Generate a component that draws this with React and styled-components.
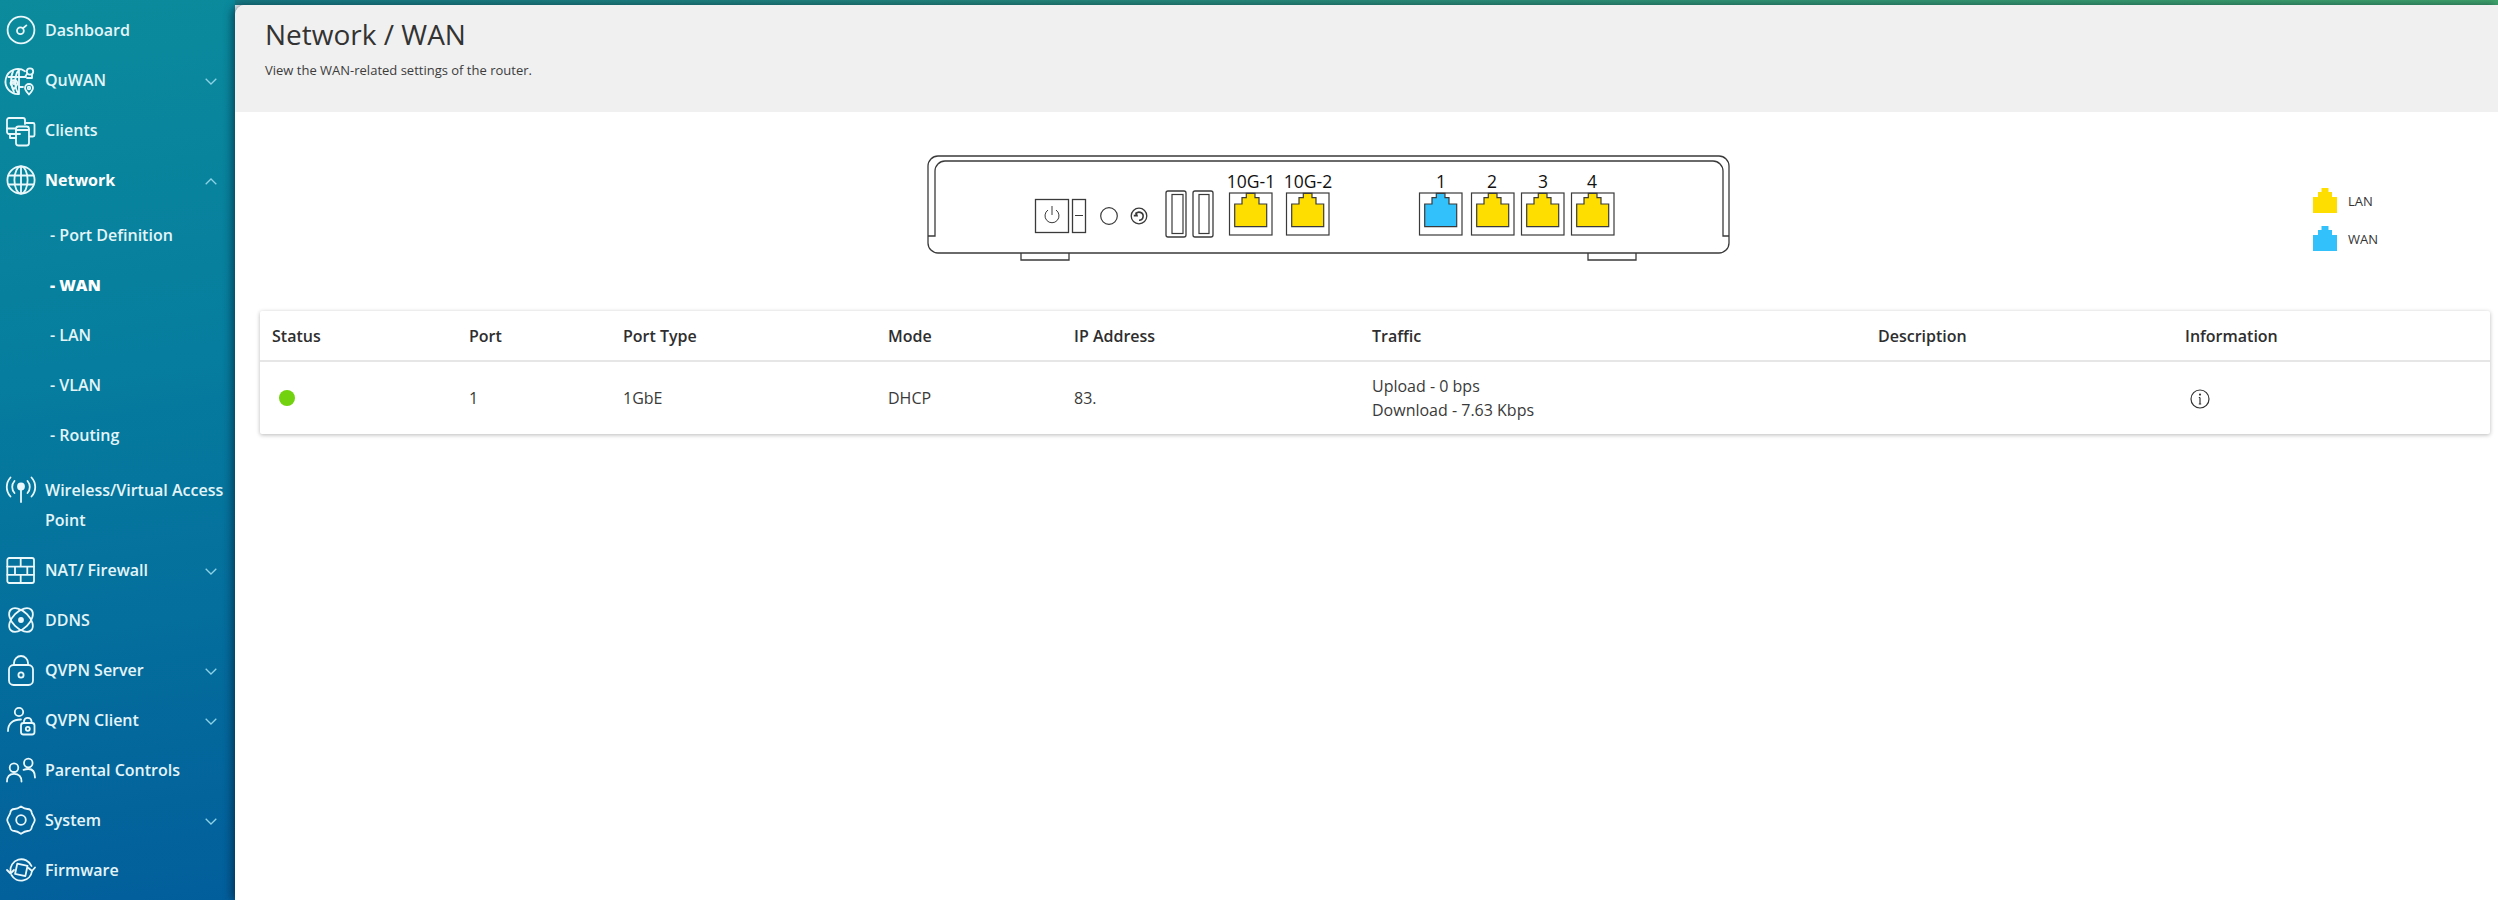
import React from "react";
import styled, { createGlobalStyle } from "styled-components";

const Global = createGlobalStyle`
  html, body { margin: 0; padding: 0; height: 100%; overflow: hidden; }
  body { font-family: "Open Sans", "Liberation Sans", sans-serif; background: #fff; }
  #root { height: 100%; }
`;

const Shell = styled.div`
  display: flex;
  width: 2498px;
  height: 900px;
  overflow: hidden;
`;

const Sidebar = styled.nav`
  width: 235px;
  flex: none;
  box-sizing: border-box;
  padding: 5px 0 0 6px;
  background: linear-gradient(172deg, #0b8b9c 0%, #067d9e 40%, #025e9b 100%);
  color: #e9f8fb;
`;

const NavItem = styled.div`
  display: flex;
  align-items: flex-start;
  padding: 10px 0;
  font-size: 16px;
  line-height: 30px;
  font-weight: ${(p) => (p.$active ? 700 : 600)};
  color: ${(p) => (p.$active ? "#fff" : "#e4f5f9")};
`;

const IconBox = styled.svg`
  flex: none;
  width: 30px;
  height: 30px;
  margin-right: 9px;
  overflow: visible;
  fill: none;
  stroke: #eaf8fb;
  stroke-width: 1.8;
  stroke-linecap: round;
  stroke-linejoin: round;
`;

const NavLabel = styled.span`
  flex: 1;
  min-width: 0;
`;

const Chevron = styled.svg`
  flex: none;
  width: 12px;
  height: 7px;
  margin: 13px 18px 0 0;
  fill: none;
  stroke: #8ed2e6;
  stroke-width: 1.3;
`;

const SubList = styled.div`
  padding: 5px 0;
`;

const SubItem = styled.div`
  padding: 10px 0 10px 44px;
  font-size: 16px;
  line-height: 30px;
  font-weight: ${(p) => (p.$active ? 800 : 600)};
  color: ${(p) => (p.$active ? "#fff" : "#e4f5f9")};
`;

const MainColumn = styled.div`
  flex: 1;
  display: flex;
  flex-direction: column;
  min-width: 0;
  position: relative;
`;

const TopStrip = styled.div`
  height: 5px;
  flex: none;
  background: linear-gradient(90deg, #177b85 0%, #2a8f7b 50%, #40a56c 100%);
`;

const Panel = styled.main`
  flex: 1;
  background: #fff;
  border-top-left-radius: 10px;
  box-shadow: -3px 0 9px rgba(0, 20, 40, 0.55);
  overflow: hidden;
`;

const PageHeader = styled.header`
  height: 107px;
  box-sizing: border-box;
  padding: 9px 0 0 30px;
  background: #f0f0f0;
`;

const Title = styled.h1`
  margin: 0;
  font-size: 28px;
  line-height: 40px;
  font-weight: 400;
  color: #333;
`;

const Subtitle = styled.p`
  margin: 7px 0 0;
  font-size: 13px;
  line-height: 18px;
  color: #3c3c3c;
`;

const DiagramRow = styled.section`
  display: flex;
  align-items: flex-start;
  height: 199px;
  padding: 40px 0 0 690px;
  box-sizing: border-box;
`;

const RouterSvg = styled.svg`
  flex: none;
  width: 810px;
  height: 115px;
  fill: none;
  stroke: #3a3a3a;
  stroke-width: 1.3;
`;

const PortText = styled.text`
  font-family: "Open Sans", sans-serif;
  font-size: 17.5px;
  font-weight: 500;
  fill: #111;
  stroke: none;
  text-anchor: middle;
`;

const Legend = styled.div`
  display: flex;
  flex-direction: column;
  gap: 13px;
  margin: 36px 0 0 578px;
`;

const LegendRow = styled.div`
  display: flex;
  align-items: center;
  gap: 11px;
  font-size: 13px;
  color: #333;
`;

const LegendIcon = styled.svg`
  width: 24px;
  height: 25px;
  flex: none;
  fill: ${(p) => p.$color};
`;

const Table = styled.div`
  margin: 0 8px 0 25px;
  background: #fff;
  box-shadow: 0 1px 4px rgba(0, 0, 0, 0.28);
  border-radius: 2px;
`;

const columns = "197px 154px 265px 186px 298px 506px 307px 1fr";

const HeadRow = styled.div`
  display: grid;
  grid-template-columns: ${columns};
  align-items: center;
  height: 49px;
  padding-left: 12px;
  border-bottom: 2px solid #e6e6e6;
  font-size: 16px;
  font-weight: 600;
  color: #2e2e2e;
`;

const BodyRow = styled.div`
  display: grid;
  grid-template-columns: ${columns};
  align-items: center;
  height: 72px;
  padding-left: 12px;
  font-size: 16px;
  color: #3a3a3a;
`;

const StatusDot = styled.span`
  display: block;
  width: 16px;
  height: 16px;
  margin-left: 7px;
  border-radius: 50%;
  background: #72d20f;
`;

const TrafficLine = styled.div`
  line-height: 24px;
`;

const InfoIcon = styled.svg`
  display: block;
  width: 20px;
  height: 20px;
  margin: 2px 0 0 5px;
  fill: none;
  stroke: #333;
  stroke-width: 1.2;
`;

const Down = () => (
  <Chevron viewBox="0 0 12 7"><polyline points="0.7,0.7 6,6 11.3,0.7" /></Chevron>
);
const Up = () => (
  <Chevron viewBox="0 0 12 7"><polyline points="0.7,6.3 6,1 11.3,6.3" /></Chevron>
);

const icons = {
  dashboard: (
    <>
      <circle cx="15" cy="15" r="13.4" />
      <circle cx="14.4" cy="15.8" r="3.4" />
      <path d="M17 13.2 L20.4 10.4" />
    </>
  ),
  quwan: (
    <>
      <path d="M19 6.2 A12.5 12.5 0 1 0 13 29 M13 29 C8 24 8 10 13 5 M13 5 V29 M2.5 12 H12 M20 12 H13 M13 22 H17" />
      <path d="M7 6.5 C4 12 5 22 8 27" />
      <circle cx="24" cy="6.5" r="3.2" />
      <path d="M21 9 L19.5 11 M26 9.5 V13 H21" />
      <path d="M23 29.5 C20 26 19 25 19 23 A4 4 0 0 1 27 23 C27 25 26 26 23 29.5 Z" />
      <circle cx="23" cy="23" r="1.3" />
      <path d="M8 24 C5.5 21 4.5 20 4.5 18 A3.6 3.6 0 0 1 11.5 18 C11.5 20 10.5 21 8 24 Z" />
      <circle cx="8" cy="18" r="1.2" />
    </>
  ),
  clients: (
    <>
      <path d="M14 19 H3 A2 2 0 0 1 1 17 V5 A2 2 0 0 1 3 3 H17 A2 2 0 0 1 19 5 V9" />
      <path d="M1 13.5 H10 M4 19 V23 H10" />
      <path d="M19 8 H27 A1.5 1.5 0 0 1 28.5 9.5 V20 A1.5 1.5 0 0 1 27 21.5 H24" />
      <rect x="10" y="11.5" width="13" height="19" rx="2.5" />
      <path d="M10 15 H23" />
    </>
  ),
  network: (
    <>
      <circle cx="15" cy="15" r="13.6" />
      <ellipse cx="15" cy="15" rx="6.6" ry="13.6" />
      <path d="M15 1.4 V28.6 M2.4 10.5 H27.6 M2.4 19.5 H27.6" />
    </>
  ),
  wireless: (
    <>
      <circle cx="15" cy="11.5" r="3" fill="#eaf8fb" />
      <path d="M15 13 V27" />
      <path d="M8.5 6 A9 9 0 0 0 8.5 18 M21.5 6 A9 9 0 0 1 21.5 18" />
      <path d="M4.5 2.5 A14 14 0 0 0 4.5 21.5 M25.5 2.5 A14 14 0 0 1 25.5 21.5" />
    </>
  ),
  firewall: (
    <>
      <rect x="1.3" y="3" width="26.7" height="25" rx="2" />
      <path d="M1.3 11.6 H28 M1.3 19.8 H28 M14.7 3 V11.6 M9 11.6 V19.8 M21.3 11.6 V19.8 M14.7 19.8 V28" />
    </>
  ),
  ddns: (
    <>
      <g transform="rotate(45 15 15)">
        <ellipse cx="15" cy="15" rx="14.5" ry="8.4" />
        <ellipse cx="15" cy="15" rx="8.4" ry="14.5" />
      </g>
      <circle cx="15" cy="15" r="2" fill="#eaf8fb" />
    </>
  ),
  server: (
    <>
      <rect x="3" y="10" width="24" height="20" rx="4.5" />
      <path d="M8 10 V8 A7 7 0 0 1 22 8 V10" />
      <circle cx="15" cy="20" r="2.6" />
    </>
  ),
  client: (
    <>
      <circle cx="13" cy="7" r="4.2" />
      <path d="M2 26 C2 18.5 7 14.5 15 14.5" />
      <rect x="15" y="18" width="13.5" height="11.5" rx="2.5" />
      <path d="M18 18 V16 A3.8 3.8 0 0 1 25.5 16 V18" />
      <circle cx="21.8" cy="23.8" r="2" />
    </>
  ),
  parental: (
    <>
      <circle cx="8" cy="12.7" r="4.3" />
      <circle cx="22.3" cy="8" r="4.3" />
      <path d="M1 26.5 C1 21 4 18.8 8 18.8 C12 18.8 15.5 21 15.5 26.5" />
      <path d="M17.5 14.8 C19 14.3 20.5 14 22.3 14 C26.5 14 29 17 29 22.5" />
    </>
  ),
  system: (
    <>
      <path d="M15 1.5 C17.5 3.2 19 4 21.5 4 C24.5 4 25.5 6 25.8 8 C26.2 10 28.5 12 28.8 15 C28.5 18 26.2 20 25.8 22 C25.5 24.5 24 26 21.5 26 C19 26 17.5 27 15 28.8 C12.5 27 11 26 8.5 26 C6 26 4.5 24.5 4.2 22 C3.8 20 1.5 18 1.2 15 C1.5 12 3.8 10 4.2 8 C4.5 6 5.5 4 8.5 4 C11 4 12.5 3.2 15 1.5 Z" />
      <circle cx="15" cy="15" r="4.8" />
    </>
  ),
  firmware: (
    <>
      <rect x="10" y="9.5" width="10.5" height="10.5" transform="rotate(12 15 15)" />
      <path d="M4.5 17 A11 11 0 0 1 25.5 11" />
      <path d="M26 16 A11 11 0 0 1 5.5 20" />
      <path d="M1 15 L4.5 18.5 L8 15" />
      <path d="M22.5 13 L26 16 L29 12.5" />
    </>
  ),
};

const Item = ({ icon, children, chevron, active }) => (
  <NavItem $active={active}>
    <IconBox viewBox="0 0 30 30">{icons[icon]}</IconBox>
    <NavLabel>{children}</NavLabel>
    {chevron === "down" && <Down />}
    {chevron === "up" && <Up />}
  </NavItem>
);

const jack = "M5.7 33.7 V11 H13 V4.7 H17.3 V0.3 H26 V4.7 H30 V11 H37.7 V33.7 Z";

const ports = [
  { x: 304, label: "10G-1", cx: 326, color: "#fedd00" },
  { x: 361, label: "10G-2", cx: 383, color: "#fedd00" },
  { x: 494, label: "1", cx: 516, color: "#33c1fb" },
  { x: 546, label: "2", cx: 567, color: "#fedd00" },
  { x: 596, label: "3", cx: 618, color: "#fedd00" },
  { x: 646, label: "4", cx: 667, color: "#fedd00" },
];

const Router = () => (
  <RouterSvg viewBox="0 0 810 115">
    <path d="M13 4 H794 A10 10 0 0 1 804 14 V91 A10 10 0 0 1 794 101 H13 A10 10 0 0 1 3 91 V14 A10 10 0 0 1 13 4 Z" />
    <path d="M3 84 H10 V19 A10 10 0 0 1 20 9 H788 A10 10 0 0 1 798 19 V84 H804" />
    <path d="M96 101 V108 H144 V101 M663 101 V108 H711 V101" />
    <rect x="110.5" y="47.5" width="33" height="33" />
    <path d="M123 58 A7 7 0 1 0 131 58 M127 54 V63" strokeWidth="1" />
    <rect x="147.5" y="47.5" width="13" height="33" />
    <path d="M150 63.5 H158" strokeWidth="1" />
    <circle cx="184" cy="64" r="8.3" strokeWidth="1.2" />
    <circle cx="214" cy="64" r="7.8" />
    <path d="M210.5 62.5 A4 4 0 1 1 214 68.2 M208.8 63.6 L212 63.6 L210.8 60.4" strokeWidth="1.6" />
    <rect x="241" y="39" width="20" height="46" rx="2" />
    <rect x="247" y="42.5" width="11" height="39" strokeWidth="1.2" />
    <rect x="268" y="39" width="20" height="46" rx="2" />
    <rect x="274" y="42.5" width="10" height="39" strokeWidth="1.2" />
    {ports.map((p) => (
      <g key={p.label}>
        <rect x={p.x + 0.5} y="41" width="42.5" height="42" strokeWidth="1.2" />
        <path d={jack} transform={`translate(${p.x} 41)`} fill={p.color} strokeWidth="1.2" />
        <PortText x={p.cx} y="36">{p.label}</PortText>
      </g>
    ))}
  </RouterSvg>
);

const LegendJack = ({ color }) => (
  <LegendIcon $color={color} viewBox="0 0 24 25">
    <path d="M0 25 V9 H5 V4 H8.5 V0 H15.5 V4 H19 V9 H24 V25 Z" />
  </LegendIcon>
);

export default function App() {
  return (
    <Shell>
      <Global />
      <Sidebar>
        <Item icon="dashboard">Dashboard</Item>
        <Item icon="quwan" chevron="down">QuWAN</Item>
        <Item icon="clients">Clients</Item>
        <Item icon="network" chevron="up" active>Network</Item>
        <SubList>
          <SubItem>- Port Definition</SubItem>
          <SubItem $active>- WAN</SubItem>
          <SubItem>- LAN</SubItem>
          <SubItem>- VLAN</SubItem>
          <SubItem>- Routing</SubItem>
        </SubList>
        <Item icon="wireless">Wireless/Virtual Access Point</Item>
        <Item icon="firewall" chevron="down">NAT/ Firewall</Item>
        <Item icon="ddns">DDNS</Item>
        <Item icon="server" chevron="down">QVPN Server</Item>
        <Item icon="client" chevron="down">QVPN Client</Item>
        <Item icon="parental">Parental Controls</Item>
        <Item icon="system" chevron="down">System</Item>
        <Item icon="firmware">Firmware</Item>
      </Sidebar>
      <MainColumn>
        <TopStrip />
        <Panel>
          <PageHeader>
            <Title>Network / WAN</Title>
            <Subtitle>View the WAN-related settings of the router.</Subtitle>
          </PageHeader>
          <DiagramRow>
            <Router />
            <Legend>
              <LegendRow><LegendJack color="#fedd00" />LAN</LegendRow>
              <LegendRow><LegendJack color="#33c1fb" />WAN</LegendRow>
            </Legend>
          </DiagramRow>
          <Table>
            <HeadRow>
              <div>Status</div>
              <div>Port</div>
              <div>Port Type</div>
              <div>Mode</div>
              <div>IP Address</div>
              <div>Traffic</div>
              <div>Description</div>
              <div>Information</div>
            </HeadRow>
            <BodyRow>
              <div><StatusDot /></div>
              <div>1</div>
              <div>1GbE</div>
              <div>DHCP</div>
              <div>83.</div>
              <div>
                <TrafficLine>Upload - 0 bps</TrafficLine>
                <TrafficLine>Download - 7.63 Kbps</TrafficLine>
              </div>
              <div />
              <div>
                <InfoIcon viewBox="0 0 20 20">
                  <circle cx="10" cy="10" r="9" />
                  <path d="M10 8.5 V15 M8.8 8.5 H10 M8.8 15 H11.2" />
                  <circle cx="10" cy="5.6" r="0.5" />
                </InfoIcon>
              </div>
            </BodyRow>
          </Table>
        </Panel>
      </MainColumn>
    </Shell>
  );
}
